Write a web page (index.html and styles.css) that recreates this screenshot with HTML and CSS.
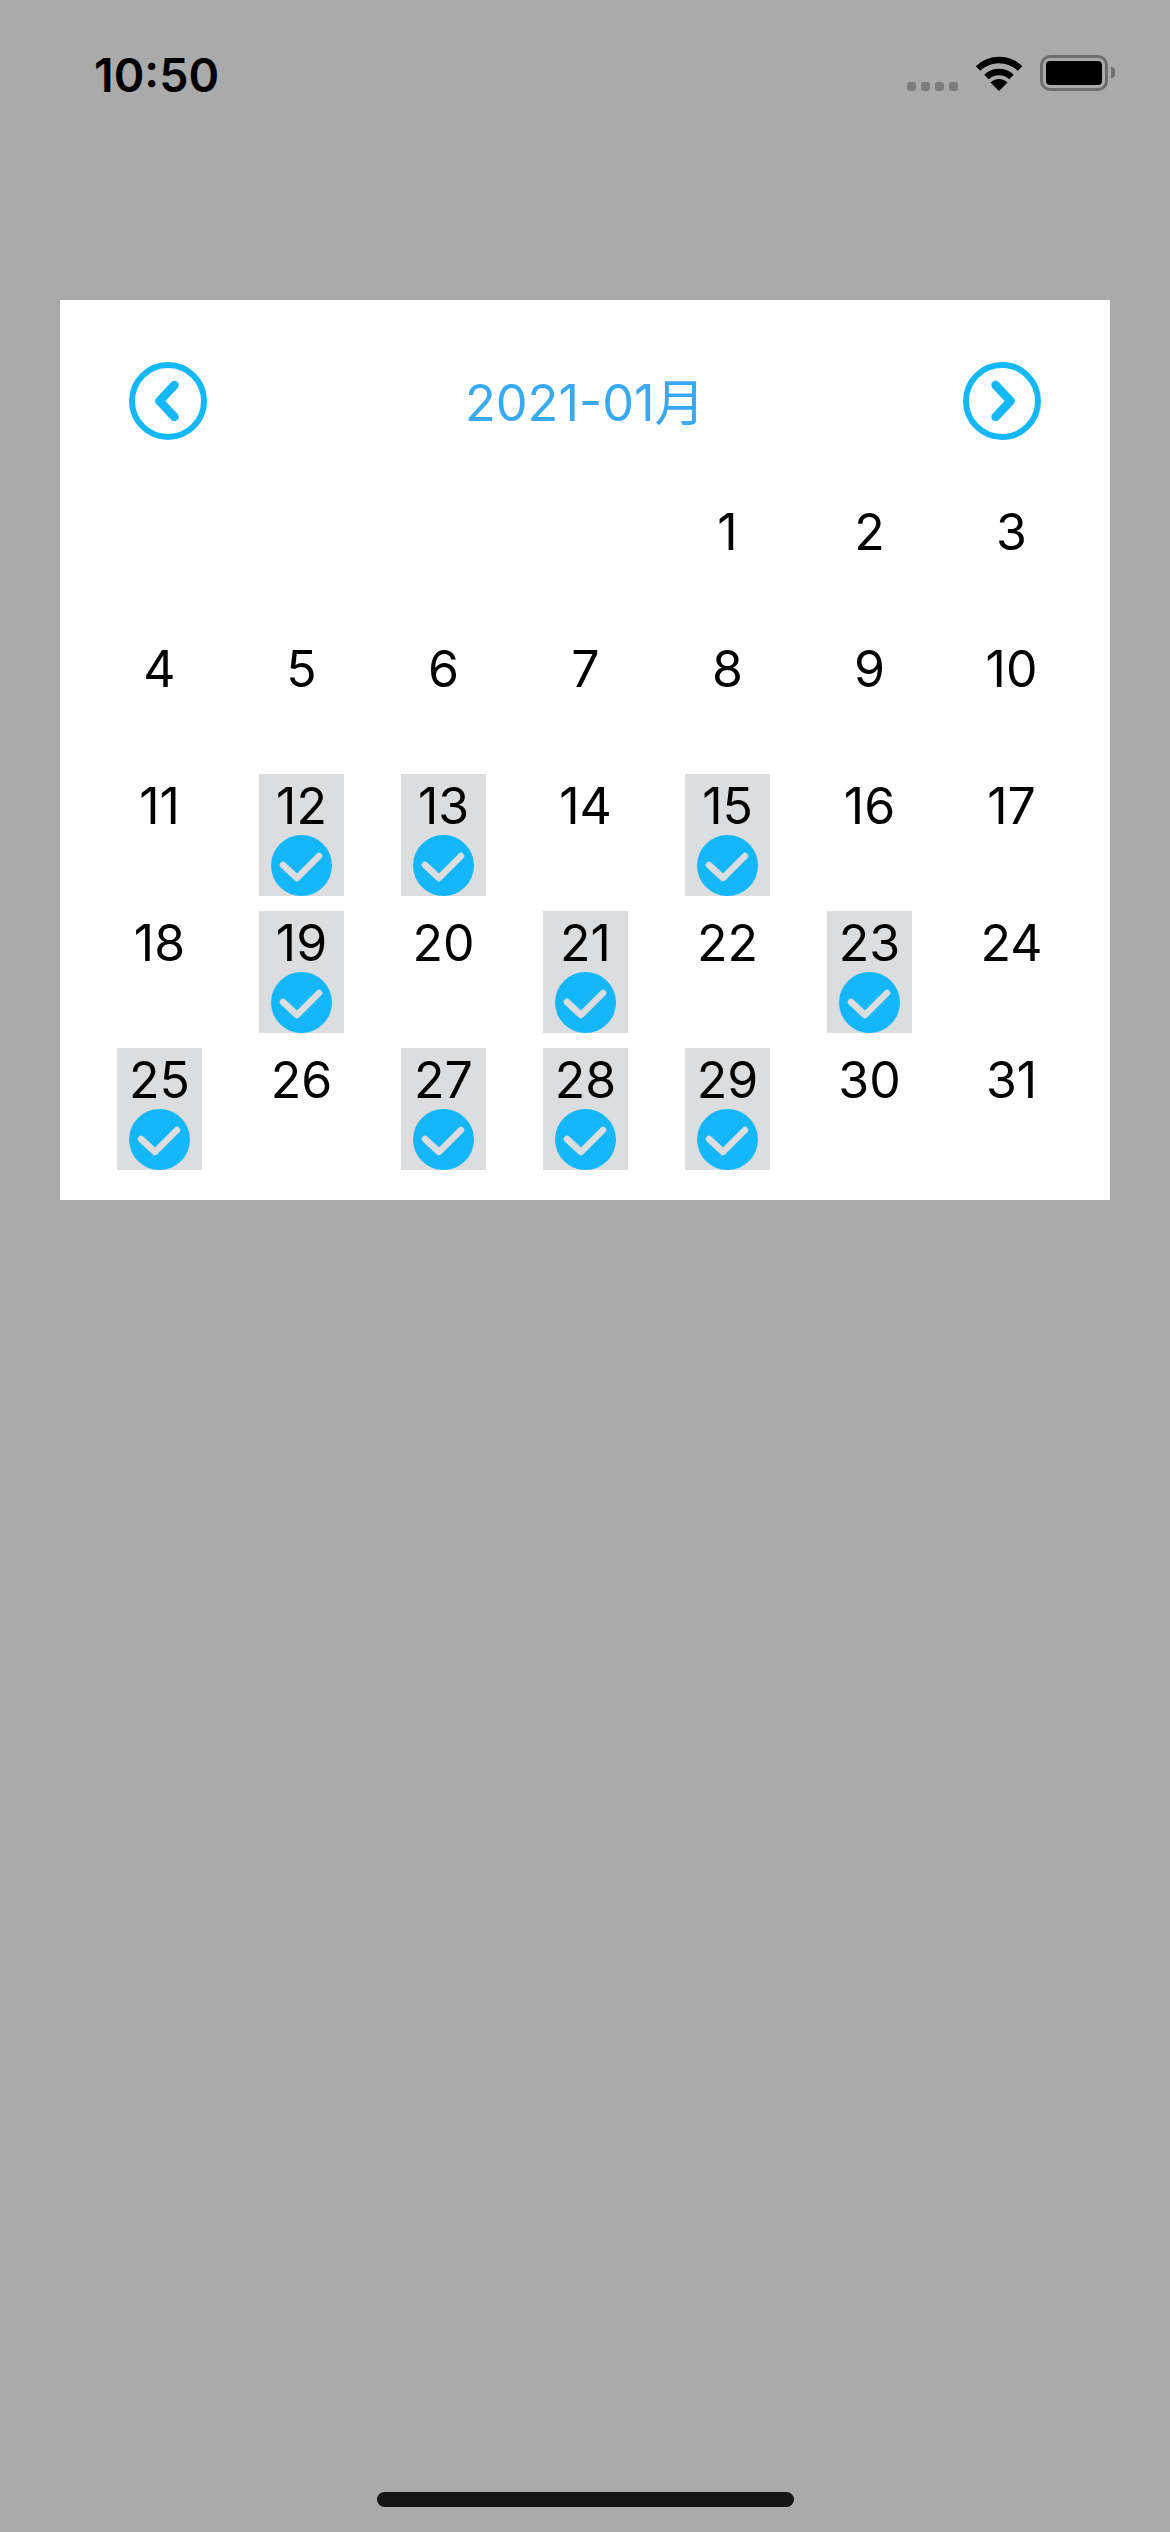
FILE: index.html
```html
<!DOCTYPE html>
<html lang="en">
<head>
<meta charset="UTF-8">
<meta name="viewport" content="width=device-width, initial-scale=1.0">
<title>Calendar</title>
<link rel="stylesheet" href="styles.css">
</head>
<body>

<div class="page">
  <div class="status-bar">
    <span class="time">10:50</span>
    <div class="status-icons">
      <div class="signal"><i></i><i></i><i></i><i></i></div>
      <svg class="wifi" width="48" height="36" viewBox="0 0 48 36">
        <path d="M3 13.5A30 30 0 0 1 45 13.5" fill="none" stroke="#000" stroke-width="6.5"/>
        <path d="M11.5 22A18 18 0 0 1 36.500 22" fill="none" stroke="#000" stroke-width="6.5"/>
        <path d="M24 36L15.500 27.500A12 12 0 0 1 32.500 27.500Z" fill="#000"/>
      </svg>
      <div class="battery"><div class="battery-fill"></div></div>
      <div class="battery-nub"></div>
    </div>
  </div>

  <div class="card">
    <div class="cal-header">
      <svg class="nav-icon" width="78" height="78" viewBox="0 0 78 78">
        <circle cx="39" cy="39" r="36" fill="none" stroke="#14b8fa" stroke-width="6"/>
        <path d="M45.500 23L30.500 39L45.500 55" fill="none" stroke="#14b8fa" stroke-width="8.500" stroke-linecap="round" stroke-linejoin="round"/>
      </svg>
      <span class="month">2021-01月</span>
      <svg class="nav-icon" width="78" height="78" viewBox="0 0 78 78">
        <circle cx="39" cy="39" r="36" fill="none" stroke="#14b8fa" stroke-width="6"/>
        <path d="M32.500 23L47.500 39L32.500 55" fill="none" stroke="#14b8fa" stroke-width="8.500" stroke-linecap="round" stroke-linejoin="round"/>
      </svg>
    </div>

    <div class="days">
      <div class="day"></div>
      <div class="day"></div>
      <div class="day"></div>
      <div class="day"></div>
      <div class="day">1</div>
      <div class="day">2</div>
      <div class="day">3</div>

      <div class="day">4</div>
      <div class="day">5</div>
      <div class="day">6</div>
      <div class="day">7</div>
      <div class="day">8</div>
      <div class="day">9</div>
      <div class="day">10</div>

      <div class="day">11</div>
      <div class="day checked">12<svg class="check" viewBox="0 0 61 61"><circle cx="30.500" cy="30.500" r="30.500"/><path d="M12 30L26 43L48 21"/></svg></div>
      <div class="day checked">13<svg class="check" viewBox="0 0 61 61"><circle cx="30.500" cy="30.500" r="30.500"/><path d="M12 30L26 43L48 21"/></svg></div>
      <div class="day">14</div>
      <div class="day checked">15<svg class="check" viewBox="0 0 61 61"><circle cx="30.500" cy="30.500" r="30.500"/><path d="M12 30L26 43L48 21"/></svg></div>
      <div class="day">16</div>
      <div class="day">17</div>

      <div class="day">18</div>
      <div class="day checked">19<svg class="check" viewBox="0 0 61 61"><circle cx="30.500" cy="30.500" r="30.500"/><path d="M12 30L26 43L48 21"/></svg></div>
      <div class="day">20</div>
      <div class="day checked">21<svg class="check" viewBox="0 0 61 61"><circle cx="30.500" cy="30.500" r="30.500"/><path d="M12 30L26 43L48 21"/></svg></div>
      <div class="day">22</div>
      <div class="day checked">23<svg class="check" viewBox="0 0 61 61"><circle cx="30.500" cy="30.500" r="30.500"/><path d="M12 30L26 43L48 21"/></svg></div>
      <div class="day">24</div>

      <div class="day checked">25<svg class="check" viewBox="0 0 61 61"><circle cx="30.500" cy="30.500" r="30.500"/><path d="M12 30L26 43L48 21"/></svg></div>
      <div class="day">26</div>
      <div class="day checked">27<svg class="check" viewBox="0 0 61 61"><circle cx="30.500" cy="30.500" r="30.500"/><path d="M12 30L26 43L48 21"/></svg></div>
      <div class="day checked">28<svg class="check" viewBox="0 0 61 61"><circle cx="30.500" cy="30.500" r="30.500"/><path d="M12 30L26 43L48 21"/></svg></div>
      <div class="day checked">29<svg class="check" viewBox="0 0 61 61"><circle cx="30.500" cy="30.500" r="30.500"/><path d="M12 30L26 43L48 21"/></svg></div>
      <div class="day">30</div>
      <div class="day">31</div>
    </div>
  </div>

  <div class="home-bar"></div>
</div>

</body>
</html>
```
FILE: styles.css
```css
/* Calendar page */
body {
  font-family: Inter, "Noto Sans CJK SC", sans-serif;
  margin: 0;
  padding: 0;
  background-color: #aaaaaa;
}
.page {
  display: flex;
  flex-direction: column;
  height: 2532px;
}
.status-bar {
  display: flex;
  justify-content: space-between;
  height: 300px;
  padding: 50px 55px 0 94px;
  box-sizing: border-box;
}
.time {
  font-size: 46.5px;
  font-weight: 600;
  line-height: 50px;
  color: #000;
  height: 50px;
}
.status-icons {
  display: flex;
  align-items: flex-start;
  padding-top: 5px;
}
.signal {
  display: flex;
  gap: 5px;
  margin: 27px 17px 0 0;
}
.signal i {
  display: block;
  width: 9px;
  height: 9px;
  border-radius: 3px;
  background-color: #7c7c7c;
}
.wifi {
  margin-right: 17px;
}
.battery {
  width: 68px;
  height: 36px;
  box-sizing: border-box;
  border: 3px solid #6e6e6e;
  border-radius: 10px;
  padding: 3px;
}
.battery-fill {
  height: 100%;
  background-color: #000;
  border-radius: 4px;
}
.battery-nub {
  width: 4px;
  height: 11px;
  margin: 12px 0 0 3px;
  background-color: #6e6e6e;
  border-radius: 0 6px 6px 0;
}
.card {
  background-color: #fff;
  margin: 0 60px;
  height: 900px;
  box-sizing: border-box;
  padding-top: 62px;
}
.cal-header {
  display: flex;
  justify-content: space-between;
  align-items: center;
  padding: 0 69px;
  margin-bottom: 60px;
}
.month {
  font-size: 50.5px;
  line-height: 72px;
  padding-top: 3px;
  color: #3aa9f5;
}
.days {
  display: grid;
  grid-template-columns: repeat(7, 85px);
  grid-auto-rows: 122px;
  column-gap: 57px;
  row-gap: 15px;
  padding: 0 56px 0 57px;
}
.day {
  font-size: 50px;
  line-height: 64px;
  text-align: center;
  color: #000;
}
.checked {
  background-color: #dcddde;
}
.check {
  display: block;
  width: 61px;
  height: 61px;
  margin: -3px auto 0;
}
.check circle {
  fill: #14b8fa;
}
.check path {
  fill: none;
  stroke: #dcdde0;
  stroke-width: 6.5;
  stroke-linecap: round;
  stroke-linejoin: round;
}
.home-bar {
  width: 417px;
  height: 15px;
  margin: auto auto 25px 377px;
  background-color: #141414;
  border-radius: 8px;
}
```
